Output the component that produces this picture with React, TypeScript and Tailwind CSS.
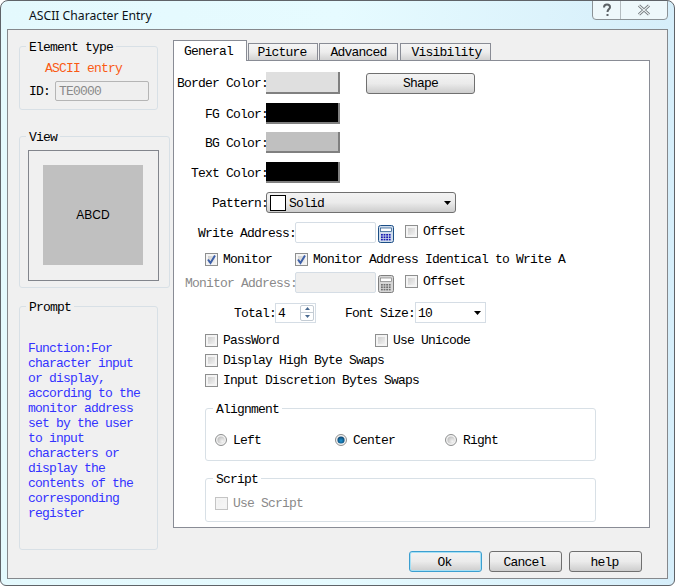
const mono = "font-['Liberation_Mono',monospace] text-[13px] tracking-[-0.8px] leading-[14px]";
const gloss = "bg-gradient-to-b from-[#f3f3f3] via-[#ebebeb] to-[#cdcdcd] border border-[#707070] rounded-[3px]";

// the reference's baseline sits a pixel lower than Liberation Mono's in the same line box
function T({ children, className }: { children: React.ReactNode; className?: string }) {
  return <span className={"inline-block translate-y-px whitespace-nowrap " + (className ?? "")}>{children}</span>;
}

// group captions hang lower on the border line than the browser's legend does
function Caption({ text }: { text: string }) {
  return <span className="inline-block translate-y-[2px] whitespace-nowrap">{text}</span>;
}

function Box({ checked, disabled }: { checked?: boolean; disabled?: boolean }) {
  return (
    <span
      className={
        "relative block w-[13px] h-[13px] shrink-0 border p-[2px] " +
        (disabled ? "border-[#c4c4c4] bg-[#f4f4f4]" : "border-[#8e8f8f] bg-[#f4f4f4]")
      }
    >
      <span
        className={
          "block w-full h-full bg-gradient-to-br " +
          (disabled ? "from-[#f0f0f0] to-[#f7f7f7]" : "from-[#cfcfcf] to-[#f1f1f1]")
        }
      />
      {checked && (
        <svg viewBox="0 0 13 13" className="absolute -left-px -top-px w-[13px] h-[13px]">
          <path d="M3 6.5 L5.5 10 L10 2.5" fill="none" stroke="#3c5fa8" strokeWidth="2" />
        </svg>
      )}
    </span>
  );
}

function Check({ label, checked, disabled, className }: { label: string; checked?: boolean; disabled?: boolean; className?: string }) {
  return (
    <div className={"flex items-center gap-[5px] h-[14px] " + (className ?? "")}>
      <Box checked={checked} disabled={disabled} />
      <T className={disabled ? "text-[#8a8a8a]" : "text-black"}>{label}</T>
    </div>
  );
}

function Radio({ label, on, className }: { label: string; on?: boolean; className?: string }) {
  return (
    <div className={"flex items-center gap-[6px] " + (className ?? "")}>
      <svg viewBox="0 0 12 12" className="w-[12px] h-[12px] shrink-0">
        <defs>
          <radialGradient id="radioOff" cx="0.7" cy="0.7" r="0.8">
            <stop offset="0" stopColor="#f4f4f4" />
            <stop offset="1" stopColor="#bdbdbd" />
          </radialGradient>
          <radialGradient id="radioOn" cx="0.5" cy="0.6" r="0.6">
            <stop offset="0" stopColor="#1e96d4" />
            <stop offset="1" stopColor="#0b3c66" />
          </radialGradient>
        </defs>
        <circle cx="6" cy="6" r="5.5" fill="#f2f2f2" stroke="#8e8f8f" />
        <circle cx="6" cy="6" r="3.6" fill={on ? "url(#radioOn)" : "url(#radioOff)"} />
      </svg>
      <T>{label}</T>
    </div>
  );
}

function CalcIcon({ disabled }: { disabled?: boolean }) {
  const frame = disabled ? "#7f7f7f" : "#1c4f86";
  const keys = disabled ? "#6e6e6e" : "#1a1ab0";
  const cells = [];
  for (let row = 0; row < 3; row++) {
    for (let col = 0; col < 4; col++) {
      cells.push(<rect key={row + "-" + col} x={3 + col * 2.6} y={9 + row * 2.4} width="1.8" height="1.6" fill={keys} />);
    }
  }
  return (
    <svg viewBox="0 0 16 18" className="w-[16px] h-[18px] shrink-0">
      <rect x="0.5" y="0.5" width="15" height="17" rx="2" fill={disabled ? "#d6d6d6" : "#cfdcec"} stroke={frame} />
      <rect x="2.5" y="3" width="11" height="3.5" fill="#fff" stroke={frame} strokeWidth="0.7" />
      {cells}
    </svg>
  );
}

function Input({ value, disabled, className }: { value?: string; disabled?: boolean; className?: string }) {
  return (
    <div
      className={
        "flex items-center pl-[3px] border rounded-[2px] border-[#d5dde5] " +
        (disabled ? "bg-[#efefef] border-[#c9c9c9]" : "bg-white") +
        " " +
        (className ?? "")
      }
    >
      {value && <T>{value}</T>}
    </div>
  );
}

function Swatch({ color }: { color: string }) {
  return <div className="w-[74px] h-full border-b-2 border-r-2 border-[#808080]" style={{ backgroundColor: color }} />;
}

function ColorRow({ label, color, className, children }: { label: string; color: string; className: string; children?: React.ReactNode }) {
  return (
    <div className={"flex items-center " + className}>
      <div className="w-[92px] text-right translate-x-[2px]">
        <T>{label}</T>
      </div>
      <Swatch color={color} />
      {children}
    </div>
  );
}

function Arrow() {
  return (
    <svg viewBox="0 0 7 4" className="w-[7px] h-[4px] shrink-0">
      <path d="M0 0 H7 L3.5 4 Z" fill="#000" />
    </svg>
  );
}

function AddressRow({ label, disabled, className }: { label: string; disabled?: boolean; className: string }) {
  return (
    <div className={"flex h-[21px] " + className}>
      <div className={"w-[121px] text-right self-center " + (disabled ? "text-[#8a8a8a] translate-x-[2px]" : "translate-x-px")}>
        <T>{label}</T>
      </div>
      <Input disabled={disabled} className="w-[81px]" />
      <div className="ml-[2px] mt-[3px]">
        <CalcIcon disabled={disabled} />
      </div>
      <Check label="Offset" className="ml-[11px] mt-[2px]" />
    </div>
  );
}

function TabLabel({ text, cls, active }: { text: string; cls: string; active?: boolean }) {
  return (
    <div
      className={
        active
          ? "relative z-10 -mb-px h-[21px] bg-white border border-b-0 border-[#898c95] flex items-center justify-center " + cls
          : "h-[17px] bg-gradient-to-b from-[#f5f5f5] via-[#ededed] to-[#d2d2d2] border border-b-0 border-[#898c95] flex items-center justify-center " + cls
      }
    >
      <T>{text}</T>
    </div>
  );
}

function Btn({ label, focus }: { label: string; focus?: boolean }) {
  return (
    <button
      className={
        "w-[73px] h-[21px] flex items-center justify-center pr-[2px] " +
        gloss +
        (focus ? " !border-[#3c9fd0] shadow-[inset_0_0_0_1px_#a6e0f5]" : "")
      }
    >
      <T>{label}</T>
    </button>
  );
}

const groupCls = "border border-[#d8e0e6] rounded-[3px]";
const legendCls = "ml-[6px] px-[3px]";
const innerLegendCls = "ml-[7px] px-[3px]";

export default function App() {
  return (
    <div className={"w-[675px] h-[586px] overflow-hidden bg-gradient-to-r from-[#e4f9fd] via-[#e6fbff] to-[#d6eefa] border border-[#5f6368] rounded-t-[8px] rounded-b-[6px] text-black " + mono}>
      {/* Title bar */}
      <div className="flex h-[28px]">
        <div className="pl-[28px] pt-[7px] font-['Noto_Sans',sans-serif] text-[12.2px] tracking-normal leading-[16px] text-[#0c1218] whitespace-nowrap">
          ASCII Character Entry
        </div>
        <div className="ml-auto mr-[6px] -mt-px h-[20px] w-[76px] flex border border-[#8b9296] rounded-b-[4px] bg-[#eef8fb]">
          <div className="w-[28px] border-r border-[#b4bcc0] flex items-center justify-center">
            <svg viewBox="0 0 10 14" className="w-[10px] h-[14px]">
              <path d="M2 4.5 C2 2 3.5 1.5 5 1.5 C6.8 1.5 8 2.6 8 4.2 C8 6 5.5 6.2 5.5 9 M5.5 11 V13" fill="none" stroke="#5c6266" strokeWidth="2" />
            </svg>
          </div>
          <div className="flex-1 flex items-center justify-center">
            <svg viewBox="0 0 14 12" className="w-[14px] h-[12px]">
              <path d="M2 1.5 L12 10.5 M12 1.5 L2 10.5" fill="none" stroke="#6a7074" strokeWidth="3" />
              <path d="M2 1.5 L12 10.5 M12 1.5 L2 10.5" fill="none" stroke="#e8eef0" strokeWidth="1.2" />
            </svg>
          </div>
        </div>
      </div>

      {/* Client area */}
      <div className="ml-[6px] w-[661px] h-[550px] bg-[#f0f0f0] border border-[#85888c] flex">
        {/* Left column */}
        <div className="w-[162px] pl-[11px] pt-[9px] shrink-0">
          <fieldset className={groupCls + " w-[139px] h-[71px]"}>
            <legend className={legendCls}>
              <Caption text="Element type" />
            </legend>
            <div className="pl-[25px] mt-[8px] text-[#fa5a14]">
              <T>ASCII entry</T>
            </div>
            <div className="flex items-center mt-[6px] pl-[9px]">
              <T className="w-[26px]">ID:</T>
              <Input value="TE0000" disabled className="w-[94px] h-[20px] text-[#8a8a8a] !border-[#b5b5b5]" />
            </div>
          </fieldset>

          <fieldset className={groupCls + " w-[151px] h-[159px] mt-[19px]"}>
            <legend className={legendCls}>
              <Caption text="View" />
            </legend>
            <div className="ml-[8px] mt-[7px] w-[131px] h-[131px] border border-[#82858c] pl-[14px] pt-[14px]">
              <div className="w-[100px] h-[100px] bg-[#c0c0c0] flex items-center justify-center font-['Liberation_Sans',sans-serif] text-[12px] tracking-normal">
                ABCD
              </div>
            </div>
          </fieldset>

          <fieldset className={groupCls + " w-[139px] h-[251px] mt-[11px]"}>
            <legend className={legendCls}>
              <Caption text="Prompt" />
            </legend>
            <p className="ml-[8px] mt-[27px] w-[119px] leading-[15px] text-[#3333ff] translate-y-px">
              Function:For character input or display, according to the monitor address set by the user to input characters or display the contents of the corresponding register
            </p>
          </fieldset>
        </div>

        {/* Tabs and buttons */}
        <div className="ml-[3px] w-[477px] pt-[10px]">
          <div className="flex items-end gap-px h-[20px]">
            <TabLabel text="General" cls="w-[74px] pr-[3px]" active />
            <TabLabel text="Picture" cls="w-[70px] pr-[2px]" />
            <TabLabel text="Advanced" cls="w-[79px]" />
            <TabLabel text="Visibility" cls="w-[91px] ml-px pl-[2px]" />
          </div>

          <div className="h-[468px] bg-white border border-[#898c95] pt-[11px]">
            <ColorRow label="Border Color:" color="#dfdfdf" className="h-[22px]">
              <button className={"ml-[26px] w-[109px] h-[21px] flex items-center justify-center " + gloss}>
                <T>Shape</T>
              </button>
            </ColorRow>
            <ColorRow label="FG Color:" color="#000000" className="h-[21px] mt-[9px]" />
            <ColorRow label="BG Color:" color="#c0c0c0" className="h-[21px] mt-[8px]" />
            <ColorRow label="Text Color:" color="#000000" className="h-[21px] mt-[9px]" />

            <div className="flex items-center h-[21px] mt-[9px]">
              <div className="w-[92px] text-right translate-x-[2px]">
                <T>Pattern:</T>
              </div>
              <div className={"w-[190px] h-full flex items-center pl-[3px] pr-[3px] " + gloss}>
                <span className="w-[16px] h-[16px] bg-white border border-black shrink-0" />
                <T className="ml-[3px]">Solid</T>
                <span className="ml-auto mr-[1px]">
                  <Arrow />
                </span>
              </div>
            </div>

            <AddressRow label="Write Address:" className="mt-[9px]" />

            <div className="flex items-center h-[16px] mt-[8px] pl-[31px]">
              <Check label="Monitor" checked className="w-[90px]" />
              <Check label="Monitor Address Identical to Write A" checked />
            </div>

            <AddressRow label="Monitor Address:" disabled className="mt-[5px]" />

            <div className="flex items-center h-[21px] mt-[9px]">
              <div className="w-[101px] text-right translate-x-px">
                <T>Total:</T>
              </div>
              <div className="w-[41px] h-[20px] flex items-center border border-[#d5dde5] pl-[2px] pr-[1px]">
                <T>4</T>
                <div className="ml-auto w-[14px] h-[16px] flex flex-col border border-[#c4ccd4] rounded-[2px]">
                  <div className="flex-1 flex items-center justify-center border-b border-[#c4ccd4]">
                    <svg viewBox="0 0 5 3" className="w-[5px] h-[3px]"><path d="M0 3 L2.5 0 L5 3 Z" fill="#4a6a90" /></svg>
                  </div>
                  <div className="flex-1 flex items-center justify-center">
                    <svg viewBox="0 0 5 3" className="w-[5px] h-[3px]"><path d="M0 0 H5 L2.5 3 Z" fill="#4a6a90" /></svg>
                  </div>
                </div>
              </div>
              <T className="ml-[29px] w-[70px]">Font Size:</T>
              <div className="w-[71px] h-full flex items-center border border-[#d5dde5] pl-[2px] pr-[4px]">
                <T>10</T>
                <span className="ml-auto">
                  <Arrow />
                </span>
              </div>
            </div>

            <div className="flex mt-[10px] pl-[31px]">
              <Check label="PassWord" className="w-[170px]" />
              <Check label="Use Unicode" />
            </div>
            <Check label="Display High Byte Swaps" className="mt-[6px] ml-[31px]" />
            <Check label="Input Discretion Bytes Swaps" className="mt-[6px] ml-[31px]" />

            <fieldset className={groupCls + " ml-[31px] mt-[14px] w-[391px] h-[60px]"}>
              <legend className={innerLegendCls}>
                <Caption text="Alignment" />
              </legend>
              <div className="flex items-center mt-[18px] pl-[9px]">
                <Radio label="Left" className="w-[120px]" />
                <Radio label="Center" on className="w-[110px]" />
                <Radio label="Right" />
              </div>
            </fieldset>

            <fieldset className={groupCls + " ml-[31px] mt-[10px] w-[391px] h-[51px]"}>
              <legend className={innerLegendCls}>
                <Caption text="Script" />
              </legend>
              <Check label="Use Script" disabled className="ml-[9px] mt-[11px]" />
            </fieldset>
          </div>

          <div className="flex justify-end gap-[7px] pr-[8px] mt-[23px]">
            <Btn label="Ok" focus />
            <Btn label="Cancel" />
            <Btn label="help" />
          </div>
        </div>
      </div>
    </div>
  );
}
